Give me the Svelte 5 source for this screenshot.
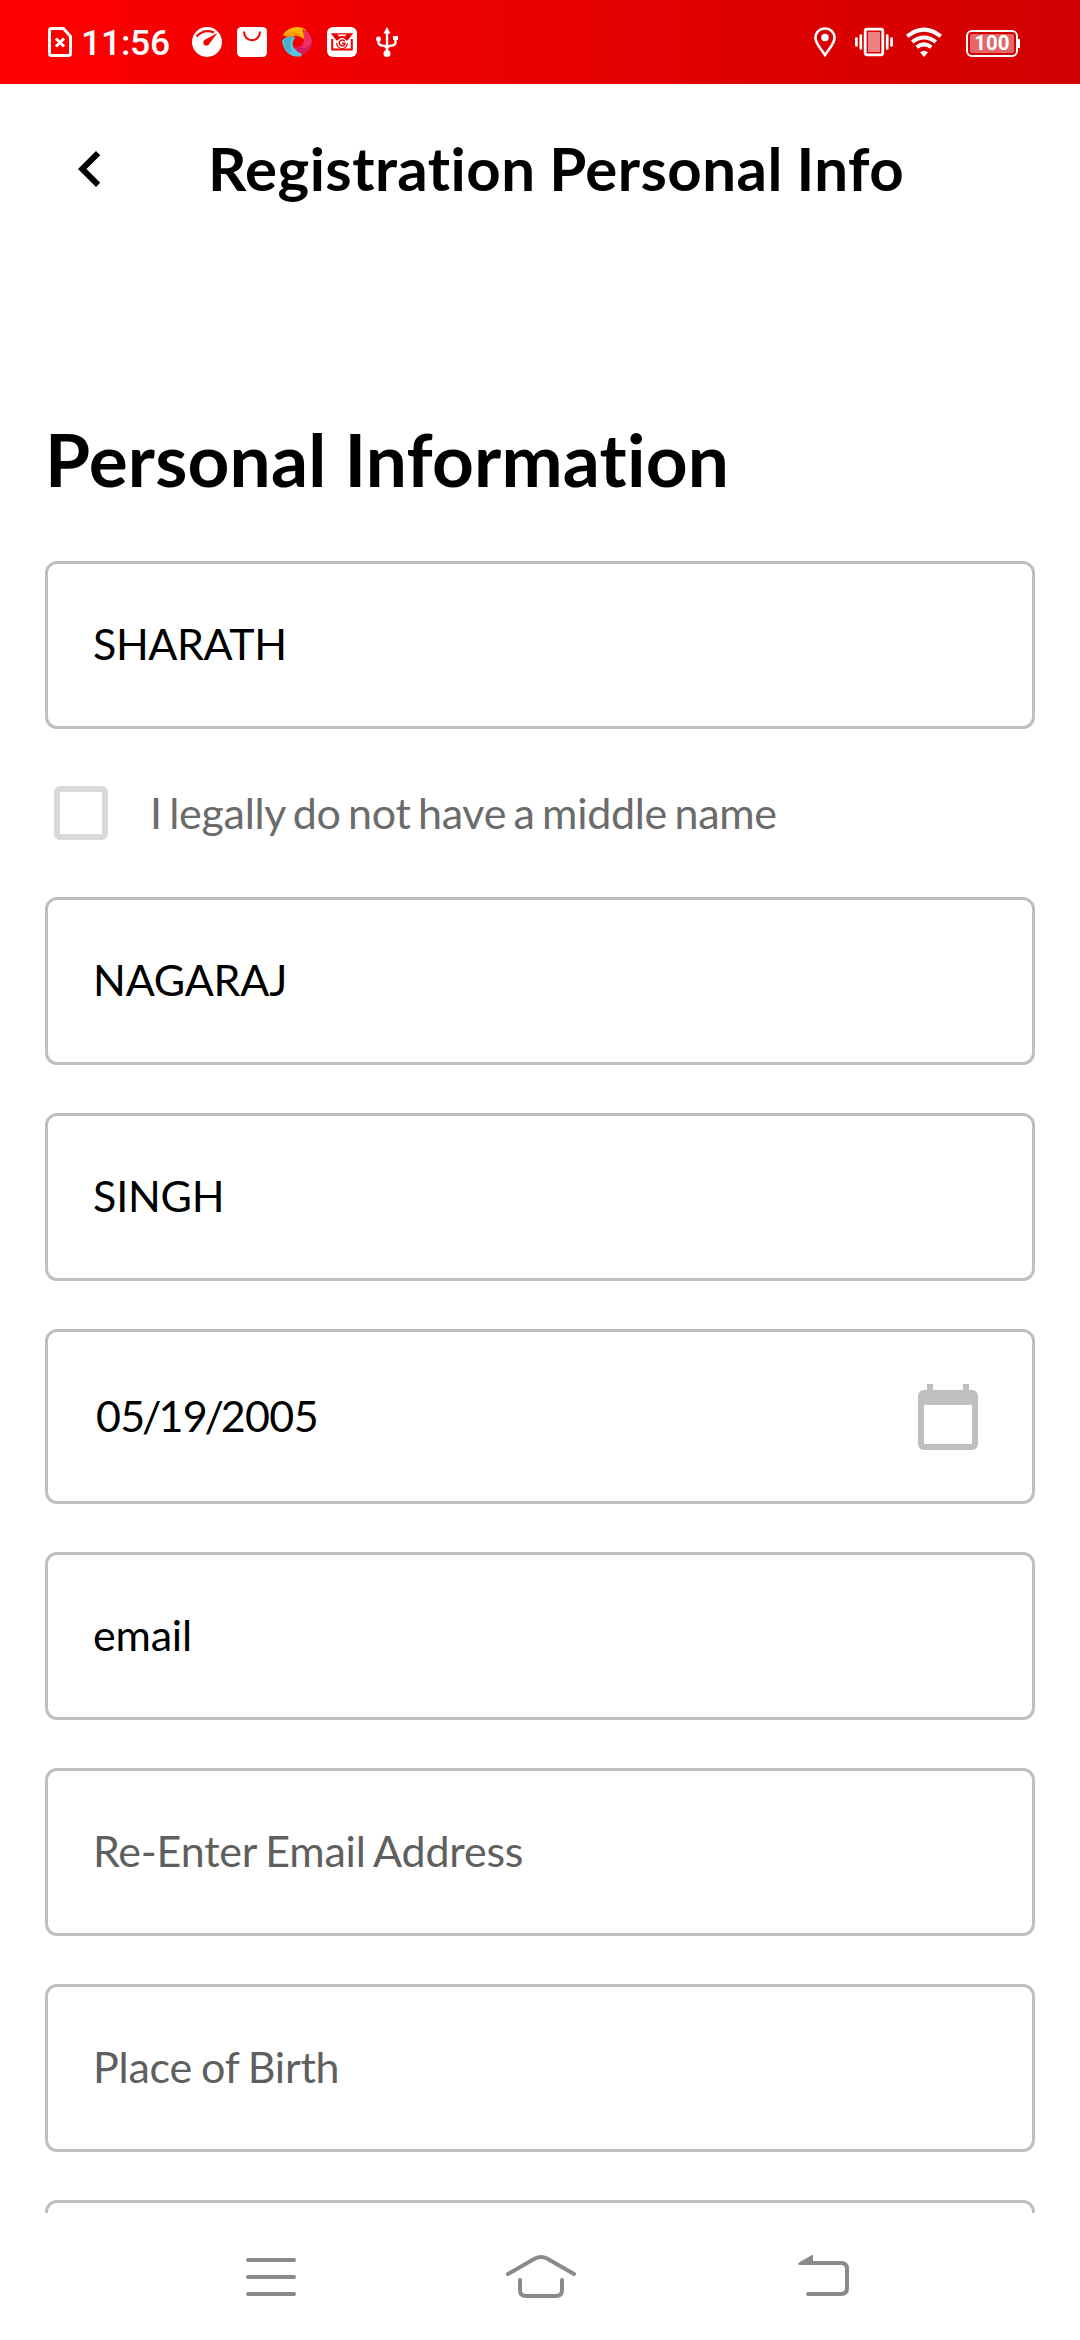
<script>
  const fields = [
    { value: 'NAGARAJ' },
    { value: 'SINGH' },
    { date: ['05', '19', '2005'] },
    { value: 'email' },
    { value: 'Re-Enter Email Address', hint: true },
    { value: 'Place of Birth', hint: true },
    { value: '' }
  ];
</script>

<div class="screen">
  <header class="status">
    <svg class="sim" width="24" height="30" viewBox="0 0 24 30" fill="none" stroke="#fff">
      <path d="M3.500 1.500H15.500L22.500 9.500V26.500Q22.500 28.500 20.500 28.500H3.500Q1.500 28.500 1.500 26.500V3.500Q1.500 1.500 3.500 1.500Z" stroke-width="3" />
      <path d="M8 11.500l8 8M16 11.500l-8 8" stroke-width="3" />
    </svg>
    <span class="clock">11:56</span>
    <div class="notices">
      <svg width="30" height="30" viewBox="0 0 30 30">
        <circle cx="15" cy="15" r="15" fill="#fff" />
        <path d="M4.500 9.500Q12 1.500 22 5.500" fill="none" stroke="#f70000" stroke-width="2.200" />
        <path d="M25.500 6L17.500 16.500A3.200 3.200 0 1 1 12.800 12.800Z" fill="#f70000" />
      </svg>
      <svg width="30" height="30" viewBox="0 0 30 30">
        <rect width="30" height="30" rx="4.500" fill="#fff" />
        <path d="M7 4.500C7 16 23 16 23 4.500" fill="none" stroke="#f40000" stroke-width="2" />
      </svg>
      <svg width="30" height="30" viewBox="0 0 30 30">
        <path d="M1 8Q6 0 15 0Q22 0 24.500 4L22 12Q17 7 10 9.500Q4 10 1 8Z" fill="#ffb300" />
        <path d="M1 8Q9 3 16 6Q20 8 21.500 12Q16 7 10 9.500Q4 10 1 8Z" fill="#ff9800" />
        <path d="M24.500 4Q30 9 30 15Q29 25 21 27Q14 26 11.500 20Q20 21 22 14Q23 8 20 2Z" fill="#d81b60" />
        <path d="M24 3.500Q30 9 29.500 16Q26 21 20 21Q23 15 21.500 5Z" fill="#ee2f66" />
        <path d="M0 14Q2 9.500 10 9.500Q12.500 9.500 13 10.500Q9 16 12 21Q15 25 20 27L19 29.500Q3 31 0 14Z" fill="#5cc3dc" />
        <path d="M2 11.500Q6 9.500 11 10Q6 17 10 24L7 26Q1 20 2 11.500Z" fill="#45b0cd" />
      </svg>
      <svg width="30" height="30" viewBox="0 0 30 30">
        <rect width="30" height="30" rx="6" fill="#fff" />
        <g fill="none" stroke="#ef0000">
          <path d="M3.800 6.200H26.200L20.500 13.500H19.500Q15 8 10.500 13.500H9.500Z" fill="#ef0000" stroke="none" />
          <path d="M10.500 7.500H19.500L18 9.500Q15 8.500 12 9.500Z" fill="#fff" stroke="none" />
          <path d="M5.200 12V22.500H24.800V12" stroke-width="2" />
          <path d="M9.500 16Q10.500 21.500 15 21.500Q19.500 21.500 20.500 16" stroke-width="1.200" />
          <path d="M17.800 14Q14.500 11.800 12.600 14.600Q11.600 18.500 15 18.800Q18 18.800 17.800 16.200H15" stroke-width="1.500" />
        </g>
      </svg>
      <svg class="usb" width="22" height="30" viewBox="0 0 22 30" fill="none" stroke="#fff" stroke-width="2.400">
        <path d="M11 5V26M2.500 12V15.500Q2.500 18 6 18.500Q11 19 11 22Q11 19 16 18.500Q19.500 18 19.500 15.500V11" />
        <path d="M11 0L14.500 6.500H7.500ZM17 9H22V13H17Z" fill="#fff" stroke="none" />
        <circle cx="2.500" cy="12" r="2.500" fill="#fff" stroke="none" />
        <circle cx="11" cy="26.500" r="3.500" fill="#fff" stroke="none" />
      </svg>
    </div>
    <div class="system">
      <svg width="22" height="30" viewBox="0 0 22 30">
        <path d="M11 1.500C5.500 1.500 1.500 5.500 1.500 11C1.500 16.500 7 22 11 28C15 22 20.500 16.500 20.500 11C20.500 5.500 16.500 1.500 11 1.500Z" fill="none" stroke="#fff" stroke-width="2.600" />
        <circle cx="11" cy="10.500" r="3.800" fill="#fff" />
      </svg>
      <svg class="vibrate" width="38" height="30" viewBox="0 0 38 30" fill="none" stroke="#fff">
        <rect x="10.200" y="2.200" width="17.600" height="25.600" rx="2" stroke-width="2.800" />
        <rect x="13" y="5" width="12" height="20" fill="#fff" fill-opacity=".5" stroke="none" />
        <path d="M1.400 11.500V18.500M5.800 8.500V21.500M32.200 8.500V21.500M36.600 11.500V18.500" stroke-width="2.700" stroke-linecap="round" />
      </svg>
      <svg class="wifi" width="36" height="30" viewBox="0 0 36 30" fill="none" stroke="#fff" stroke-width="4">
        <path d="M1.200 9.300Q18-4 34.800 9.300M6.200 15Q18 6 29.800 15M10.700 20.300Q18 14.500 25.300 20.300" />
        <path d="M14 25.200Q18 22.200 22 25.200L18 30Z" fill="#fff" stroke="none" />
      </svg>
      <div class="battery"><span class="level">100</span></div>
      <i class="tip"></i>
    </div>
  </header>

  <div class="appbar">
    <svg width="72" height="72" viewBox="0 0 24 24"><path d="M15.410 16.590L10.830 12l4.580-4.590L14 6l-6 6 6 6z" /></svg>
    <h1>Registration Personal Info</h1>
  </div>

  <main>
    <h2>Personal Information</h2>
    <div class="field first">SHARATH</div>
    <div class="check">
      <span class="box"></span>
      <span class="label">I legally do not have a middle name</span>
    </div>
    <div class="list">
      {#each fields as f}
        {#if f.date}
          <div class="field date">
            <span class="digits">{f.date[0]}<span class="slash">/</span>{f.date[1]}<span class="slash">/</span>{f.date[2]}</span>
            <svg width="72" height="72" viewBox="0 0 24 24" fill="#bfbfbf"><path d="M20 3h-1V1h-2v2H7V1H5v2H4c-1.100 0-2 .9-2 2v16c0 1.100.9 2 2 2h16c1.100 0 2-.9 2-2V5c0-1.100-.9-2-2-2zm0 18H4V8h16v13z" /></svg>
          </div>
        {:else}
          <div class="field" class:hint={f.hint}>{f.value}</div>
        {/if}
      {/each}
    </div>
  </main>

  <nav>
    <svg width="50" height="46" viewBox="0 0 50 46" fill="none" stroke="#8a8a8a" stroke-width="4" stroke-linecap="round">
      <path d="M2 7H48M2 24H48M2 41H48" />
    </svg>
    <svg class="home" width="70" height="46" viewBox="0 0 70 46" fill="none" stroke="#8a8a8a" stroke-width="4" stroke-linecap="round">
      <path d="M2 21L29 5.600Q35 2.400 41 5.600L68 21M14 27V37Q14 43 20 43H50Q56 43 56 37V27" />
    </svg>
    <svg class="back" width="51" height="46" viewBox="0 0 51 46" fill="none" stroke="#8a8a8a" stroke-width="4" stroke-linecap="round">
      <path d="M4 10H43Q49 10 49 16V35Q49 41 43 41H10" />
      <path d="M1 9.500L13.500 2.200Q15 1.500 15 3V12H1.500Q-1 11.500 1 9.500Z" fill="#8a8a8a" stroke="none" />
    </svg>
  </nav>
</div>

<style>
  :global(body) { margin: 0; background: #fff; }
  .screen {
    width: 1080px;
    height: 2340px;
    display: flex;
    flex-direction: column;
    overflow: hidden;
    background: #fff;
    color: #000;
    font-family: Lato, "Liberation Sans", sans-serif;
    font-variant-ligatures: none;
  }
  svg { display: block; flex: none; }
  .status {
    height: 84px;
    flex: none;
    box-sizing: border-box;
    padding: 0 60px 0 48px;
    display: flex;
    align-items: center;
    background: linear-gradient(90deg, #f00, #d00000);
    color: #fff;
    font-family: Roboto, sans-serif;
  }
  .clock { font-size: 35.5px; font-weight: 500; line-height: 42px; letter-spacing: -.2px; margin-left: 9px; width: 111px; white-space: nowrap; padding-top: 2px; }
  .notices { display: flex; gap: 15px; }
  .usb { margin-left: 4px; }
  .system { display: flex; align-items: center; margin-left: auto; }
  .vibrate { margin-left: 19px; }
  .wifi { margin-left: 13px; }
  .battery {
    box-sizing: border-box;
    width: 52px;
    height: 27px;
    margin: 3px 0 0 24px;
    padding: 2px;
    border: 2px solid #fff;
    border-radius: 6px;
    display: flex;
  }
  .level { flex: 1; border-radius: 2px; background: rgba(255, 255, 255, .4); font-size: 20.5px; font-weight: 700; line-height: 19px; text-align: center; }
  .tip { width: 2px; height: 9px; margin-top: 3px; background: #fff; }
  .appbar { height: 170px; flex: none; box-sizing: border-box; padding: 49px 54px 0; display: flex; align-items: flex-start; }
  h1 { margin: -1px 0 0 82px; font-size: 60px; font-weight: 700; line-height: 72px; letter-spacing: .45px; word-spacing: -1.4px; white-space: nowrap; }
  main { flex: 1; min-height: 0; overflow: hidden; padding: 0 45px; }
  h2 { margin: 161px 0 0; font-size: 73px; font-weight: 700; line-height: 88px; letter-spacing: .2px; white-space: nowrap; height: 146px; }
  .field {
    box-sizing: border-box;
    height: 168px;
    border: 3px solid #bfbfbf;
    border-radius: 12px;
    padding: 0 48px 2px 45px;
    display: flex;
    align-items: center;
    font-size: 43px;
    line-height: 52px;
    letter-spacing: -.2px;
    word-spacing: -1.9px;
    white-space: nowrap;
  }
  .field.first { letter-spacing: -.4px; }
  .field.hint { color: #5f5f5f; }
  .field.date { height: 175px; padding: 0 48px; justify-content: space-between; }
  .digits { letter-spacing: -.65px; padding-bottom: 2px; }
  .slash { margin: 0 -2.5px; }
  .check { height: 168px; display: flex; align-items: center; padding-left: 9px; gap: 42px; }
  .box { box-sizing: border-box; width: 54px; height: 54px; border: 6px solid #d9d9d9; border-radius: 6px; }
  .label { font-size: 43px; line-height: 52px; letter-spacing: -.3px; word-spacing: -3.2px; color: #6b6b6b; white-space: nowrap; }
  .list { display: flex; flex-direction: column; gap: 48px; }
  nav { height: 127px; flex: none; box-sizing: border-box; padding: 40px 0 0 246px; display: flex; background: #fff; }
  .home { margin-left: 210px; }
  .back { margin-left: 222px; }
</style>
